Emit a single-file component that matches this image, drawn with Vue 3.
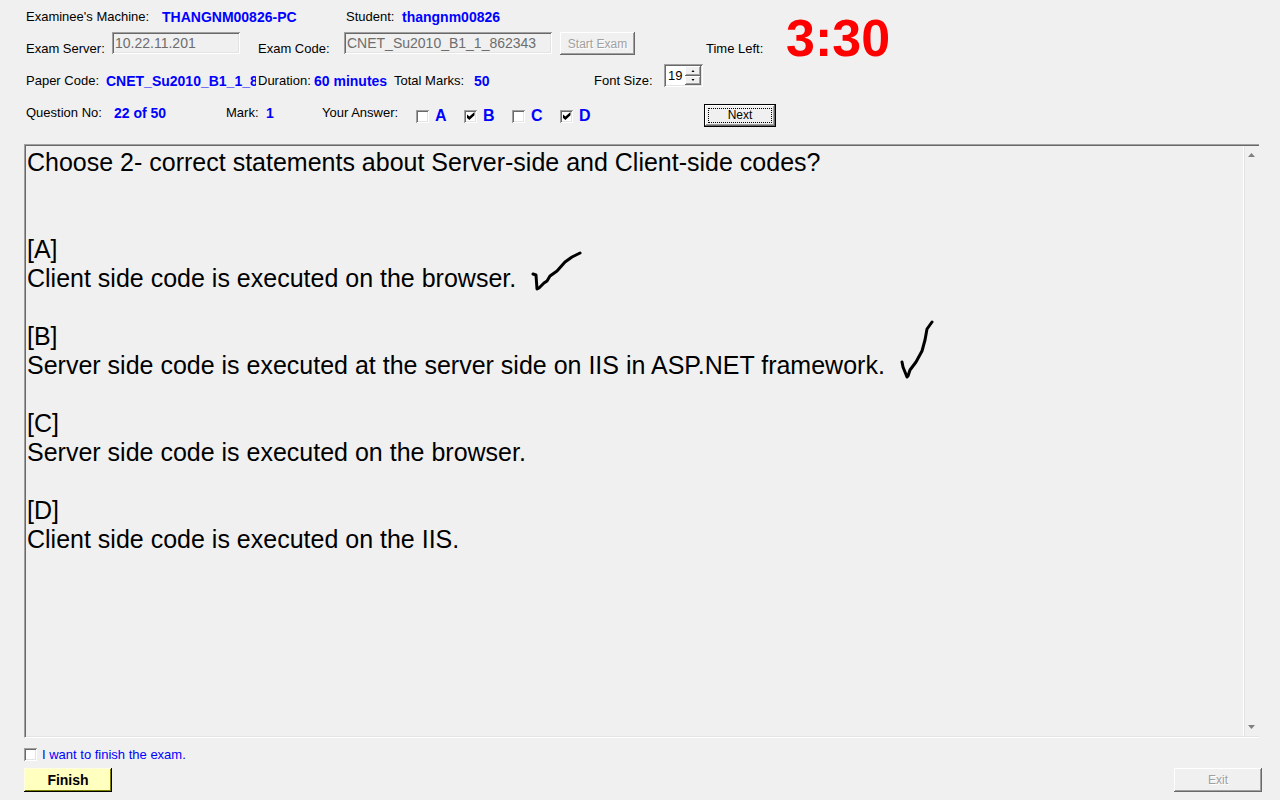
<script setup>
import { ref } from 'vue'

const server = ref('10.22.11.201')
const examCode = ref('CNET_Su2010_B1_1_862343')
const fontSize = ref(19)
const choices = ref([
  { key: 'A', checked: false },
  { key: 'B', checked: true },
  { key: 'C', checked: false },
  { key: 'D', checked: true },
])
const wantsFinish = ref(false)
const options = [
  {
    key: 'A',
    text: 'Client side code is executed on the browser.',
    mark: 'M3 23 L6 24 L7 38 L9 37 L14 32 L17 30 L20 25 L27 20 L35 11 L42 6 L50 2',
    kind: 'mark-wide',
  },
  {
    key: 'B',
    text: 'Server side code is executed at the server side on IIS in ASP.NET framework.',
    mark: 'M3 42 L4 47 L8 57 L9 56 L11 50 L17 42 L23 31 L26 20 L28 9 L33 2',
    kind: 'mark-tall',
  },
  { key: 'C', text: 'Server side code is executed on the browser.' },
  { key: 'D', text: 'Client side code is executed on the IIS.' },
]
</script>

<template>
  <main class="window">
    <header class="top">
      <div class="info">
        <div class="row row-machine">
          <span class="label">Examinee's Machine:</span>
          <strong class="value">THANGNM00826-PC</strong>
          <span class="label">Student:</span>
          <strong class="value">thangnm00826</strong>
        </div>
        <div class="row row-server">
          <label class="label" for="server">Exam Server:</label>
          <input id="server" v-model="server" class="field" type="text" disabled />
          <label class="label" for="code">Exam Code:</label>
          <input id="code" v-model="examCode" class="field" type="text" disabled />
          <button class="button start" type="button" disabled>Start Exam</button>
        </div>
        <div class="row row-paper">
          <span class="label">Paper Code:</span>
          <strong class="value">CNET_Su2010_B1_1_862343</strong>
          <span class="label">Duration:</span>
          <strong class="value">60 minutes</strong>
          <span class="label">Total Marks:</span>
          <strong class="value">50</strong>
          <label class="label" for="size">Font Size:</label>
          <div class="spinner">
            <input id="size" v-model="fontSize" type="text" inputmode="numeric" />
            <div class="steps">
              <button type="button" aria-label="Increase font size" @click="fontSize++">
                <svg viewBox="0 0 3 2"><path d="M0 2 L1.5 0 L3 2 Z" /></svg>
              </button>
              <button type="button" aria-label="Decrease font size" @click="fontSize--">
                <svg viewBox="0 0 3 2"><path d="M0 0 L1.5 2 L3 0 Z" /></svg>
              </button>
            </div>
          </div>
        </div>
        <div class="row row-question">
          <span class="label">Question No:</span>
          <strong class="value">22 of 50</strong>
          <span class="label">Mark:</span>
          <strong class="value">1</strong>
          <span class="label">Your Answer:</span>
          <div class="choices">
            <label v-for="c in choices" :key="c.key" class="choice">
              <input v-model="c.checked" class="tick" type="checkbox" />{{ c.key }}
            </label>
          </div>
        </div>
      </div>
      <div class="side">
        <div class="timer">
          <span class="label">Time Left:</span>
          <span class="clock">3:30</span>
        </div>
        <button class="next" type="button"><span>Next</span></button>
      </div>
    </header>

    <section class="paper">
      <div class="question">
        <p class="prompt">Choose 2- correct statements about Server-side and Client-side codes?</p>
        <div v-for="o in options" :key="o.key" class="option">
          <p>[{{ o.key }}]</p>
          <p>
            <span class="answer">{{ o.text
              }}<svg v-if="o.mark" :class="o.kind" class="mark" aria-hidden="true"><path :d="o.mark" /></svg></span>
          </p>
        </div>
      </div>
      <div class="scroll" aria-hidden="true">
        <svg viewBox="0 0 7 4"><path d="M0 4 L3.5 0 L7 4 Z" /></svg>
        <svg viewBox="0 0 7 4"><path d="M0 0 L3.5 4 L7 0 Z" /></svg>
      </div>
    </section>

    <footer class="bottom">
      <label class="confirm">
        <input v-model="wantsFinish" class="tick" type="checkbox" />I want to finish the exam.
      </label>
      <div class="actions">
        <button class="finish" type="button">Finish</button>
        <button class="button exit" type="button" disabled>Exit</button>
      </div>
    </footer>
  </main>
</template>

<style>
body {
  margin: 0;
  background: #f0f0f0;
}
</style>

<style scoped>
* {
  box-sizing: border-box;
}
.window {
  display: flex;
  flex-direction: column;
  min-height: 100vh;
  padding: 0 18px 8px 24px;
  background: #f0f0f0;
  color: #000;
  font: 13px/16px "Liberation Sans", Arial, sans-serif;
}
button,
input {
  margin: 0;
  padding: 0;
  border: 0;
  border-radius: 0;
  font: inherit;
  color: inherit;
}
.top {
  display: flex;
  margin-bottom: 16px;
}
.info {
  flex: 0 0 680px;
}
.row {
  display: grid;
  height: 32px;
  align-items: center;
}
.row-machine {
  grid-template-columns: 136px 184px 56px 1fr;
}
.row-server {
  grid-template-columns: 88px 144px 88px 216px 75px;
}
.row-paper {
  grid-template-columns: 80px 152px 56px 80px 80px 120px 72px 39px;
}
.row-question {
  grid-template-columns: 88px 112px 40px 56px 96px 1fr;
}
.label,
.value {
  padding-top: 1px;
  padding-left: 2px;
  white-space: nowrap;
}
.value {
  overflow: hidden;
  color: #0000ff;
  font-size: 14px;
}
.field {
  align-self: start;
  width: calc(100% - 16px);
  height: 22px;
  padding: 0 3px;
  background: #f0f0f0;
  color: #6d6d6d;
  font-size: 14px;
  box-shadow: inset 1px 1px #a0a0a0, inset -1px -1px #fff, inset 2px 2px #696969, inset -2px -2px #e3e3e3;
}
#code {
  width: calc(100% - 8px);
}
.button {
  background: #f0f0f0;
  color: #a0a0a0;
  font-size: 12px;
  text-shadow: 1px 1px #fff;
  box-shadow: inset -1px -1px #696969, inset 1px 1px #fff, inset -2px -2px #a0a0a0;
}
.start {
  align-self: start;
  height: 23px;
}
.spinner {
  display: flex;
  align-self: start;
  height: 23px;
  padding: 2px;
  background: #fff;
  box-shadow: inset 1px 1px #a0a0a0, inset -1px -1px #fff, inset 2px 2px #696969, inset -2px -2px #e3e3e3;
}
.spinner input {
  flex: 1;
  min-width: 0;
  padding-left: 2px;
  background: transparent;
  font-size: 13px;
}
.steps {
  display: grid;
  flex: 0 0 16px;
}
.steps button {
  display: grid;
  place-items: center;
  background: #f0f0f0;
  box-shadow: inset -1px -1px #696969, inset 1px 1px #fff, inset -2px -2px #a0a0a0;
}
.steps svg {
  width: 4px;
  height: 2px;
}
.choices {
  display: flex;
  padding-top: 8px;
}
.choice {
  display: flex;
  gap: 6px;
  align-items: center;
  width: 48px;
  color: #0000ff;
  font-size: 16px;
  font-weight: bold;
}
.tick {
  display: grid;
  place-items: center;
  flex: none;
  width: 13px;
  height: 13px;
  appearance: none;
  background: #fff;
  box-shadow: inset 1px 1px #a0a0a0, inset -1px -1px #fff, inset 2px 2px #696969, inset -2px -2px #e3e3e3;
}
.tick:checked::after {
  content: "";
  width: 8px;
  height: 8px;
  background: #000;
  clip-path: polygon(0 24%, 36% 56%, 100% 0, 100% 42%, 36% 100%, 0 70%);
}
.timer {
  display: flex;
  height: 104px;
}
.timer .label {
  width: 82px;
  padding-top: 41px;
}
.clock {
  padding-top: 10px;
  color: #ff0000;
  font-size: 52px;
  font-weight: bold;
  line-height: 56px;
}
.next {
  width: 72px;
  height: 23px;
  padding: 4px;
  background: #f0f0f0;
  font-size: 12px;
  line-height: 13px;
  box-shadow: inset 0 0 0 1px #000, inset -2px -2px #696969, inset 2px 2px #fff, inset -3px -3px #a0a0a0;
}
.next span {
  display: block;
  border: 1px dotted #000;
}
.paper {
  display: flex;
  flex: 1;
  margin-right: 3px;
  border-top: 1px solid #a0a0a0;
  border-left: 1px solid #a0a0a0;
  border-bottom: 1px solid #fff;
  box-shadow: inset 1px 1px #696969, inset 0 -1px #e3e3e3;
}
.question {
  flex: 1;
  padding: 3px 2px;
  font-size: 25px;
  line-height: 29px;
}
.question p {
  margin: 0;
}
.prompt {
  min-height: 87px;
}
.option {
  margin-bottom: 29px;
}
.answer {
  position: relative;
}
.mark {
  position: absolute;
  bottom: -1px;
  left: 100%;
  margin-left: 14px;
  fill: none;
  stroke: #000;
  stroke-width: 3px;
  stroke-linecap: round;
  stroke-linejoin: round;
}
.mark-wide {
  width: 54px;
  height: 42px;
}
.mark-tall {
  width: 38px;
  height: 60px;
}
.scroll {
  display: flex;
  flex-direction: column;
  justify-content: space-between;
  align-items: center;
  width: 16px;
  margin: 1px 0;
  padding: 7px 0;
  border-left: 1px solid #fff;
  box-shadow: inset 1px 0 #e3e3e3;
}
.scroll svg {
  width: 7px;
  height: 4px;
  fill: #808080;
}
.bottom {
  padding-top: 9px;
}
.confirm {
  display: inline-flex;
  gap: 5px;
  align-items: center;
  color: #0000ff;
}
.actions {
  display: flex;
  justify-content: space-between;
  margin-top: 3px;
}
.finish,
.exit {
  width: 88px;
  height: 24px;
}
.finish {
  background: #ffffc0;
  font-size: 14px;
  font-weight: bold;
  box-shadow: inset -1px -1px #000, inset 1px 1px #ffffe0, inset -2px -2px #808000;
}
</style>
